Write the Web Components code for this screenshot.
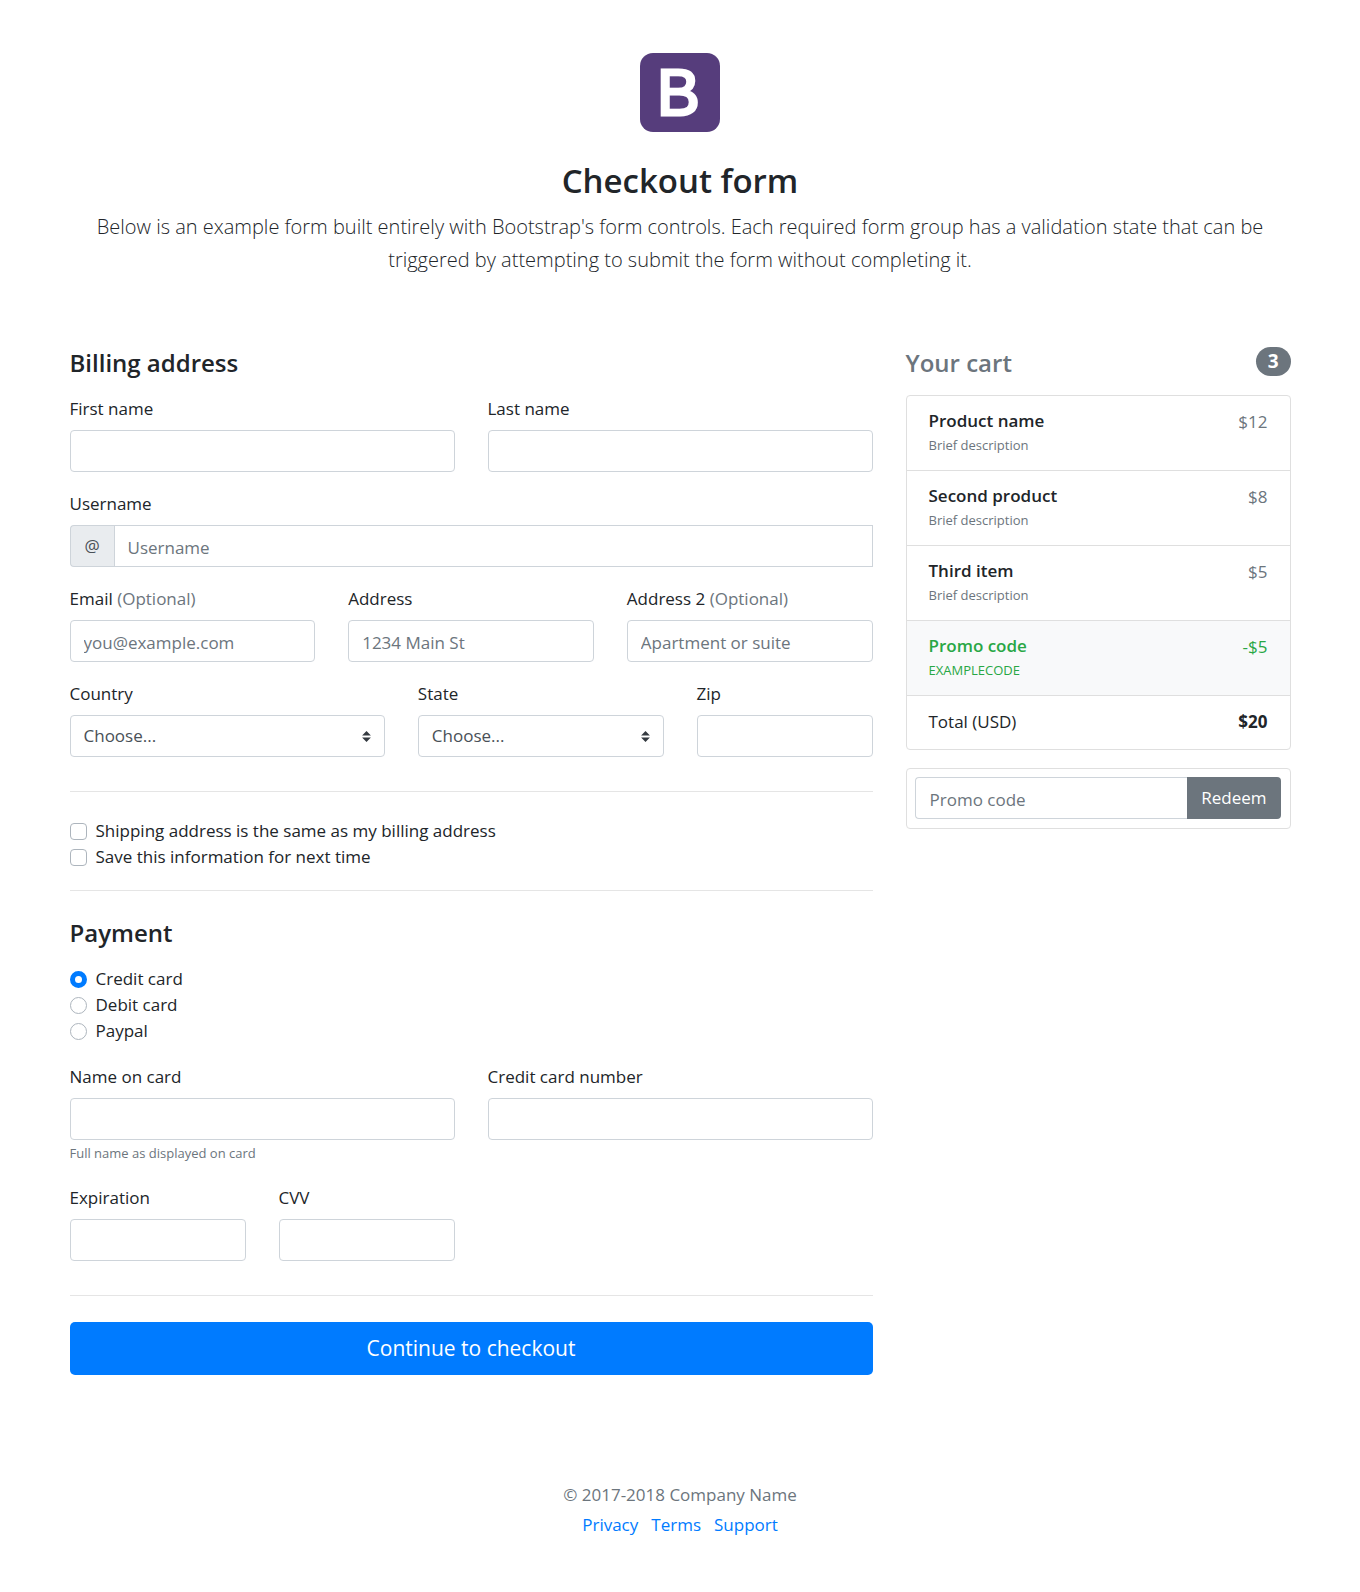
<!DOCTYPE html>
<html lang="en">
<head>
<meta charset="utf-8">
<meta name="viewport" content="width=device-width, initial-scale=1">
<title>Checkout form</title>
<style>
  :root {
    --ink: #212529;
    --muted: #6c757d;
    --line: #ced4da;
    --primary: #007bff;
    --success: #28a745;
  }
  body {
    margin: 0;
    background: #fff;
    color: var(--ink);
    font: 400 17px/26px "Open Sans", "Noto Sans", sans-serif;
  }
</style>
</head>
<body>
<checkout-page></checkout-page>

<script>
  const define = (name, html, setup) => {
    const template = document.createElement('template');
    template.innerHTML = html;
    customElements.define(name, class extends HTMLElement {
      constructor() {
        super();
        this.attachShadow({ mode: 'open' }).append(template.content.cloneNode(true));
      }
      connectedCallback() {
        if (setup && !this.ready) {
          this.ready = true;
          setup(this, this.shadowRoot);
        }
      }
    });
  };

  const controlStyles = `
    *, *::before { box-sizing: border-box; }
    label { display: block; margin-bottom: 8px; }
    input, select {
      display: block; width: 100%; min-width: 0; height: 42px; margin: 0;
      padding: 2px 13px 0; border: 1px solid var(--line); border-radius: 4px;
      background: #fff; color: #495057; font: inherit;
    }
    input::placeholder { color: var(--muted); opacity: 1; }
    input:focus, select:focus { outline: 3px solid #bfdeff; border-color: #80bdff; }
  `;

  /* Page heading: logo, title and lead text */
  define('page-intro', `
    <style>
      :host { display: block; padding: 53px 0; text-align: center; }
      svg { display: block; width: 80px; height: 79px; margin: 0 auto 28px; }
      h1 { margin: 0 0 8px; font-size: 33px; line-height: 42px; font-weight: 600; }
      p { margin: 0 0 18px; font-size: 20px; line-height: 33px; font-weight: 300; }
    </style>
    <svg viewBox="0 0 80 79" role="img" aria-label="Bootstrap">
      <rect width="80" height="79" rx="13" fill="#563d7c"/>
      <text x="17" y="62" font-family="Liberation Sans, sans-serif" font-size="64" fill="#fff" stroke="#fff" stroke-width="3">B</text>
    </svg>
    <h1><slot name="title"></slot></h1>
    <p><slot></slot></p>
  `);

  /* Labelled text box, with an optional prefix box and hint */
  define('text-field', `
    <style>
      :host { display: block; }
      ${controlStyles}
      .optional { color: var(--muted); }
      .group { display: flex; }
      .prefix {
        flex: none; display: grid; place-items: center; width: 44px; height: 42px;
        border: 1px solid var(--line); border-right: 0; border-radius: 4px 0 0 4px;
        background: #e9ecef; color: #495057;
      }
      .prefix + input { border-radius: 0; }
      small { display: block; color: var(--muted); font-size: 13px; line-height: 26px; }
    </style>
    <label for="control"></label>
    <div class="group"><input id="control" type="text"></div>
  `, (host, root) => {
    const label = root.querySelector('label');
    const input = root.querySelector('input');
    label.textContent = host.getAttribute('label');
    if (host.hasAttribute('optional')) {
      const note = document.createElement('span');
      note.className = 'optional';
      note.textContent = '(Optional)';
      label.append(' ', note);
    }
    input.type = host.getAttribute('type') || 'text';
    input.placeholder = host.getAttribute('placeholder') || '';
    if (host.hasAttribute('prefix')) {
      const prefix = document.createElement('span');
      prefix.className = 'prefix';
      prefix.textContent = host.getAttribute('prefix');
      input.before(prefix);
    }
    if (host.hasAttribute('hint')) {
      const hint = document.createElement('small');
      hint.id = 'hint';
      hint.textContent = host.getAttribute('hint');
      input.setAttribute('aria-describedby', 'hint');
      root.append(hint);
    }
  });

  /* Labelled drop-down */
  define('select-field', `
    <style>
      :host { display: block; }
      ${controlStyles}
      .box { display: grid; align-items: center; }
      select, svg { grid-area: 1 / 1; }
      select { appearance: none; padding: 0 28px 0 13px; }
      svg { justify-self: end; width: 9px; height: 11px; margin-right: 14px; pointer-events: none; }
    </style>
    <label for="control"></label>
    <div class="box">
      <select id="control"><option>Choose...</option></select>
      <svg viewBox="0 0 4 5" aria-hidden="true"><path fill="#343a40" d="M2 0L0 2h4zm0 5L0 3h4z"/></svg>
    </div>
  `, (host, root) => {
    root.querySelector('label').textContent = host.getAttribute('label');
    for (const name of (host.getAttribute('options') || '').split(',').filter(Boolean)) {
      root.querySelector('select').add(new Option(name));
    }
  });

  /* A stack of tick boxes or radios that share one name */
  define('choice-list', `
    <style>
      :host { display: block; margin-bottom: 20px; }
      label { display: flex; align-items: center; gap: 9px; width: fit-content; }
      input {
        appearance: none; box-sizing: border-box; flex: none; width: 17px; height: 17px; margin: 0;
        border: 1px solid #adb5bd; border-radius: 4px; background: #fff;
      }
      input[type=radio] { border-radius: 50%; }
      input[type=radio]:checked { border: 5px solid var(--primary); }
      input[type=checkbox]:checked { border-color: var(--primary); background: var(--primary); }
    </style>
  `, (host, root) => {
    host.getAttribute('options').split('|').forEach((text, i) => {
      const label = document.createElement('label');
      const input = document.createElement('input');
      input.type = host.getAttribute('type');
      input.name = 'choice';
      input.checked = host.getAttribute('checked') === String(i);
      label.append(input, text);
      root.append(label);
    });
  });

  /* Horizontal rule between form sections */
  define('section-rule', `
    <style>
      :host { display: block; margin-bottom: 26px; }
      hr { margin: 0; border: 0; border-top: 1px solid #e5e5e5; }
    </style>
    <hr>
  `);

  /* Billing and payment form */
  define('billing-form', `
    <style>
      :host { display: block; }
      h2 { margin: 0 0 17px; font-size: 24px; line-height: 32px; font-weight: 600; }
      .row { display: grid; grid-template-columns: repeat(12, minmax(0, 1fr)); gap: 19px 33px; margin-bottom: 19px; }
      .row.last { margin-bottom: 34px; }
      .c3 { grid-column: span 3; } .c4 { grid-column: span 4; }
      .c5 { grid-column: span 5; } .c6 { grid-column: span 6; } .c12 { grid-column: span 12; }
      button {
        display: block; width: 100%; padding: 9px 18px; border: 0; border-radius: 5px;
        background: var(--primary); color: #fff; font: inherit; font-size: 21px; line-height: 35px;
      }
      @media (max-width: 700px) { .c3, .c4, .c5, .c6 { grid-column: span 12; } }
    </style>
    <form>
      <h2>Billing address</h2>
      <div class="row last">
        <text-field class="c6" label="First name"></text-field>
        <text-field class="c6" label="Last name"></text-field>
        <text-field class="c12" label="Username" prefix="@" placeholder="Username"></text-field>
        <text-field class="c4" label="Email" type="email" optional placeholder="you@example.com"></text-field>
        <text-field class="c4" label="Address" placeholder="1234 Main St"></text-field>
        <text-field class="c4" label="Address 2" optional placeholder="Apartment or suite"></text-field>
        <select-field class="c5" label="Country" options="United States"></select-field>
        <select-field class="c4" label="State" options="California"></select-field>
        <text-field class="c3" label="Zip"></text-field>
      </div>
      <section-rule></section-rule>
      <choice-list type="checkbox" options="Shipping address is the same as my billing address|Save this information for next time"></choice-list>
      <section-rule></section-rule>
      <h2>Payment</h2>
      <choice-list type="radio" checked="0" options="Credit card|Debit card|Paypal"></choice-list>
      <div class="row">
        <text-field class="c6" label="Name on card" hint="Full name as displayed on card"></text-field>
        <text-field class="c6" label="Credit card number"></text-field>
      </div>
      <div class="row last">
        <text-field class="c3" label="Expiration"></text-field>
        <text-field class="c3" label="CVV"></text-field>
      </div>
      <section-rule></section-rule>
      <button type="button">Continue to checkout</button>
    </form>
  `);

  /* One line of the cart */
  define('cart-item', `
    <style>
      :host {
        display: flex; justify-content: space-between; padding: 13px 22px;
        border-bottom: 1px solid #dfdfdf; color: var(--muted);
      }
      :host([promo]) { background: #f8f9fa; color: var(--success); }
      h3 { margin: 0; color: var(--ink); font-size: 17px; line-height: 24px; font-weight: 600; }
      :host([promo]) h3 { color: inherit; }
      small { display: block; font-size: 13px; line-height: 24px; }
    </style>
    <div><h3><slot name="name"></slot></h3><small><slot name="note"></slot></small></div>
    <slot></slot>
  `);

  define('cart-total', `
    <style>
      :host { display: flex; justify-content: space-between; padding: 13px 22px 14px; }
      strong { font-weight: 700; }
    </style>
    <slot name="name"></slot><strong><slot></slot></strong>
  `);

  /* Promo code box with its button */
  define('promo-form', `
    <style>
      ${controlStyles}
      :host { display: block; }
      form { display: flex; padding: 8px 9px 9px 8px; border: 1px solid #dfdfdf; border-radius: 4px; }
      input { flex: 1; border-radius: 4px 0 0 4px; border-right: 0; padding-left: 14px; }
      button {
        flex: none; height: 42px; padding: 0 14px; border: 0; border-radius: 0 4px 4px 0;
        background: var(--muted); color: #fff; font: inherit;
      }
    </style>
    <form><input type="text" placeholder="Promo code" aria-label="Promo code"><button type="button">Redeem</button></form>
  `);

  /* Cart column */
  define('cart-summary', `
    <style>
      :host { display: block; }
      h2 {
        display: flex; align-items: flex-start; justify-content: space-between;
        margin: 0 0 16px; color: var(--muted); font-size: 24px; line-height: 32px; font-weight: 600;
      }
      .badge {
        padding: 0 12px; border-radius: 15px; background: var(--muted); color: #fff;
        font-size: 19px; line-height: 29px; font-weight: 700;
      }
      .list { margin-bottom: 18px; border: 1px solid #dfdfdf; border-radius: 4px; overflow: hidden; }
    </style>
    <h2><span>Your cart</span><span class="badge">3</span></h2>
    <div class="list">
      <cart-item><span slot="name">Product name</span><span slot="note">Brief description</span><span>$12</span></cart-item>
      <cart-item><span slot="name">Second product</span><span slot="note">Brief description</span><span>$8</span></cart-item>
      <cart-item><span slot="name">Third item</span><span slot="note">Brief description</span><span>$5</span></cart-item>
      <cart-item promo><span slot="name">Promo code</span><span slot="note">EXAMPLECODE</span><span>-$5</span></cart-item>
      <cart-total><span slot="name">Total (USD)</span>$20</cart-total>
    </div>
    <promo-form></promo-form>
  `);

  define('page-footer', `
    <style>
      :host { display: block; padding: 107px 0 53px; color: var(--muted); text-align: center; }
      p { margin: 0 0 4px; }
      nav { display: flex; justify-content: center; gap: 13px; }
      a { color: var(--primary); text-decoration: none; }
      a:hover { text-decoration: underline; }
    </style>
    <p>© 2017-2018 Company Name</p>
    <nav><a href="#">Privacy</a><a href="#">Terms</a><a href="#">Support</a></nav>
  `);

  define('checkout-page', `
    <style>
      :host { display: block; padding: 0 16px; }
      .wrap { max-width: 1221px; margin: 0 auto; }
      main { display: grid; grid-template-columns: repeat(12, minmax(0, 1fr)); column-gap: 33px; align-items: start; }
      billing-form { grid-column: span 8; }
      cart-summary { grid-column: span 4; }
      @media (max-width: 900px) {
        billing-form, cart-summary { grid-column: span 12; }
        cart-summary { order: -1; margin-bottom: 26px; }
      }
    </style>
    <div class="wrap">
      <page-intro>
        <span slot="title">Checkout form</span>
        Below is an example form built entirely with Bootstrap's form controls. Each required form group has a validation state that can be triggered by attempting to submit the form without completing it.
      </page-intro>
      <main>
        <billing-form></billing-form>
        <cart-summary></cart-summary>
      </main>
      <page-footer></page-footer>
    </div>
  `);
</script>
</body>
</html>
